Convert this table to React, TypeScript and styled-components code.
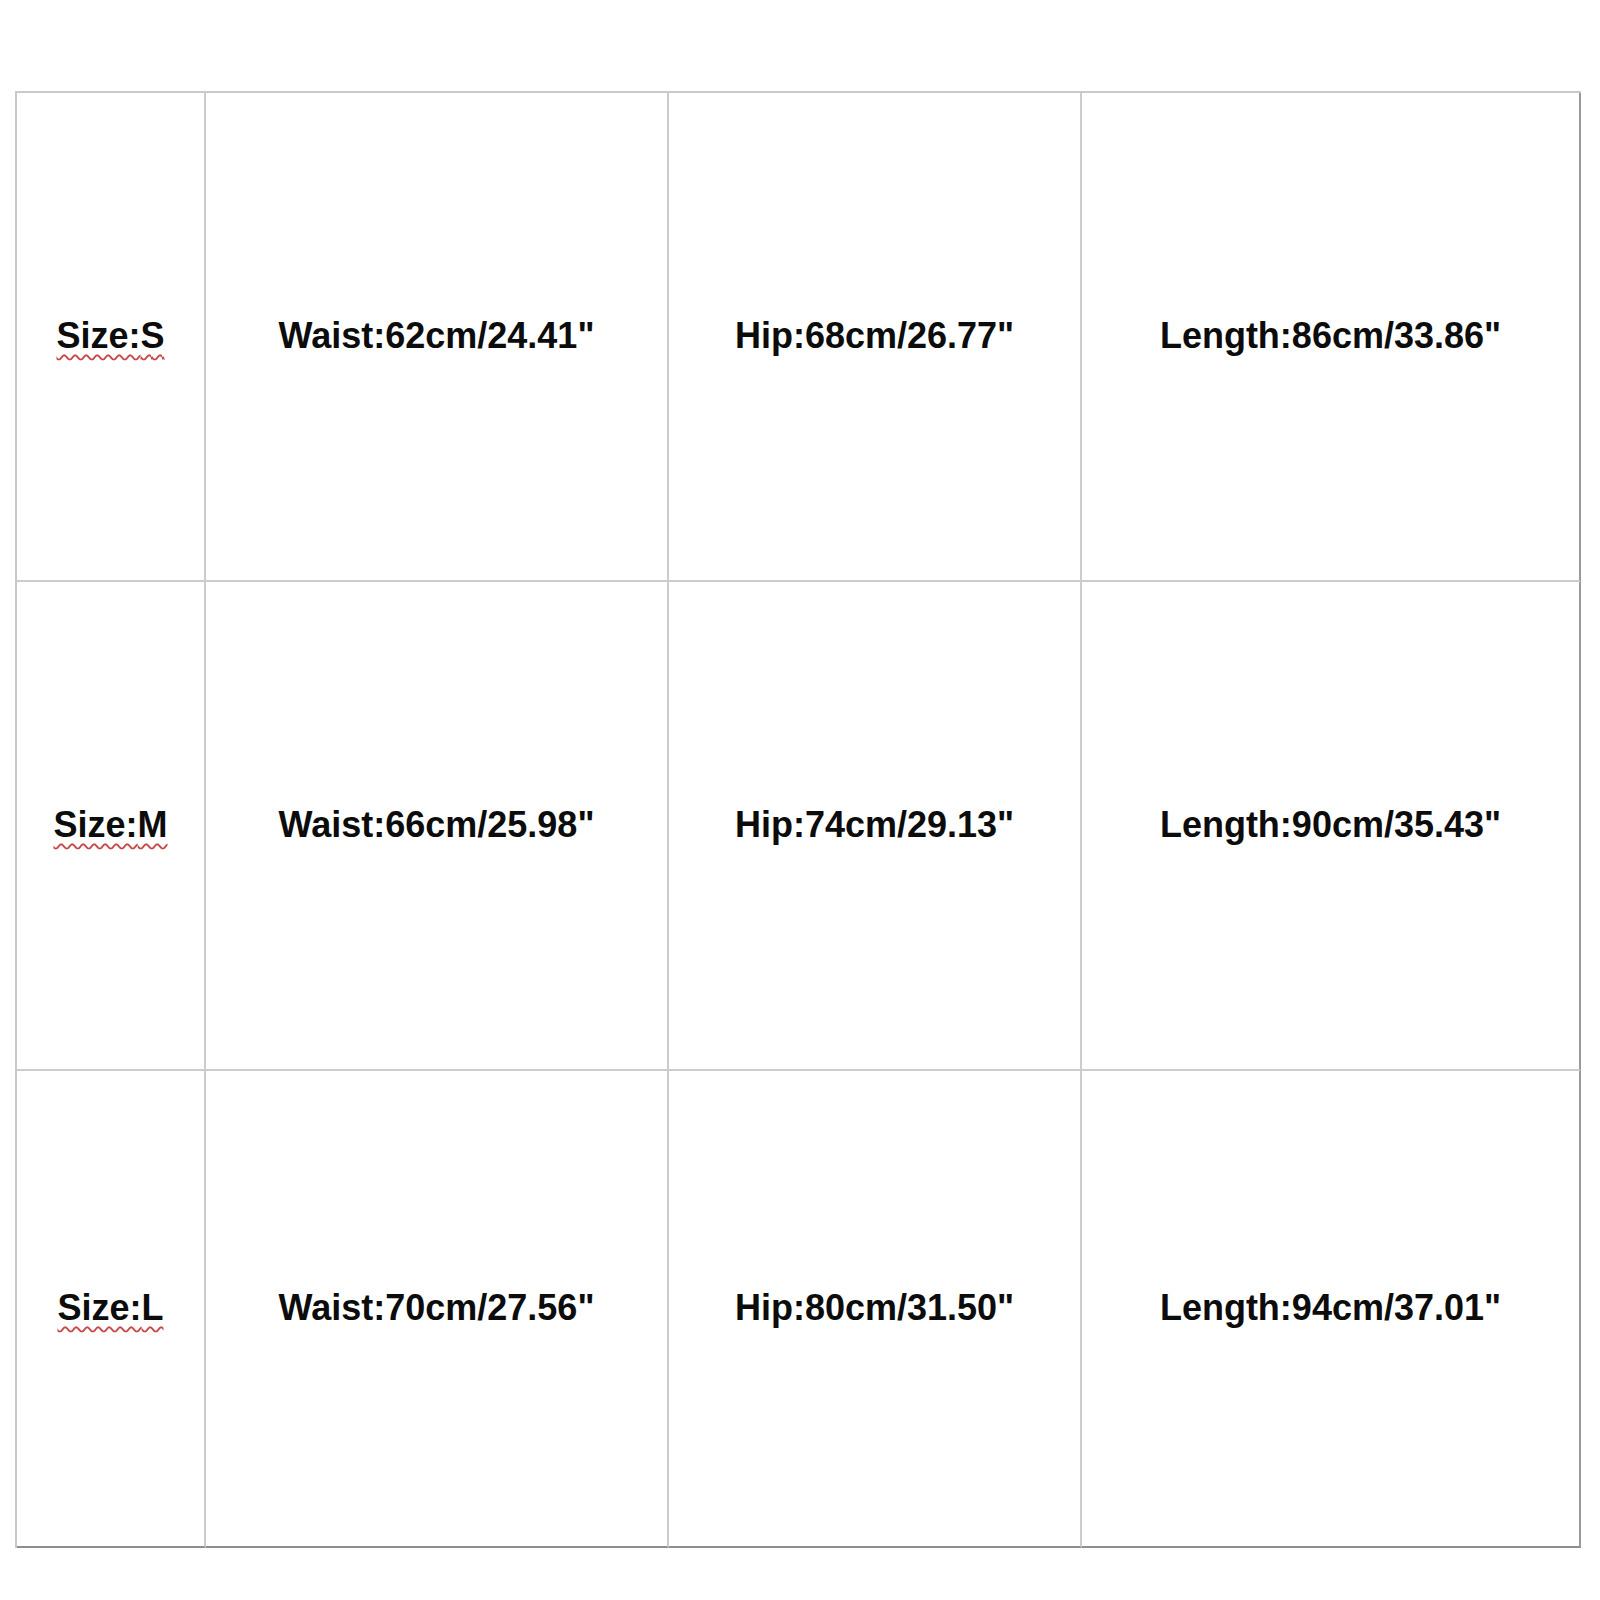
import styled, { createGlobalStyle } from 'styled-components';

const GlobalStyle = createGlobalStyle`
  html, body {
    margin: 0;
    padding: 0;
    background: #fff;
  }
  body {
    font-family: "Liberation Sans", Arial, sans-serif;
  }
`;

const Page = styled.div`
  width: 1600px;
  height: 1600px;
  padding: 91px 0 0 15px;
  box-sizing: border-box;
  background: #fff;
`;

const SizeGrid = styled.div`
  display: grid;
  grid-template-columns: 189px 463px 413px 499px;
  grid-template-rows: 489px 489px 477px;
  border-top: 2px solid #c9c9c9;
  border-left: 2px solid #c9c9c9;
  width: max-content;
`;

const Cell = styled.div<{ $lastCol?: boolean; $lastRow?: boolean }>`
  box-sizing: border-box;
  display: flex;
  align-items: center;
  justify-content: center;
  padding-bottom: 2px;
  border-right: 2px solid ${(p) => (p.$lastCol ? '#9a9a9a' : '#cccccc')};
  border-bottom: 2px solid ${(p) => (p.$lastRow ? '#8e8e8e' : '#cccccc')};
  font-size: 36px;
  font-weight: bold;
  color: #0c0c0c;
  white-space: nowrap;
`;

const SizeLabel = styled.span`
  text-decoration: underline wavy #c84848;
  text-decoration-thickness: 1.5px;
  text-underline-offset: 6px;
`;

const rows = [
  { size: 'S', waist: '62cm/24.41"', hip: '68cm/26.77"', length: '86cm/33.86"' },
  { size: 'M', waist: '66cm/25.98"', hip: '74cm/29.13"', length: '90cm/35.43"' },
  { size: 'L', waist: '70cm/27.56"', hip: '80cm/31.50"', length: '94cm/37.01"' },
];

const App: React.FC = () => {
  return (
    <>
      <GlobalStyle />
      <Page>
        <SizeGrid>
          {rows.map((r, i) => {
            const last = i === rows.length - 1;
            return [
              <Cell key={`s${i}`} $lastRow={last}>
                <SizeLabel>Size:{r.size}</SizeLabel>
              </Cell>,
              <Cell key={`w${i}`} $lastRow={last}>Waist:{r.waist}</Cell>,
              <Cell key={`h${i}`} $lastRow={last}>Hip:{r.hip}</Cell>,
              <Cell key={`l${i}`} $lastRow={last} $lastCol>
                Length:{r.length}
              </Cell>,
            ];
          })}
        </SizeGrid>
      </Page>
    </>
  );
};

export default App;
